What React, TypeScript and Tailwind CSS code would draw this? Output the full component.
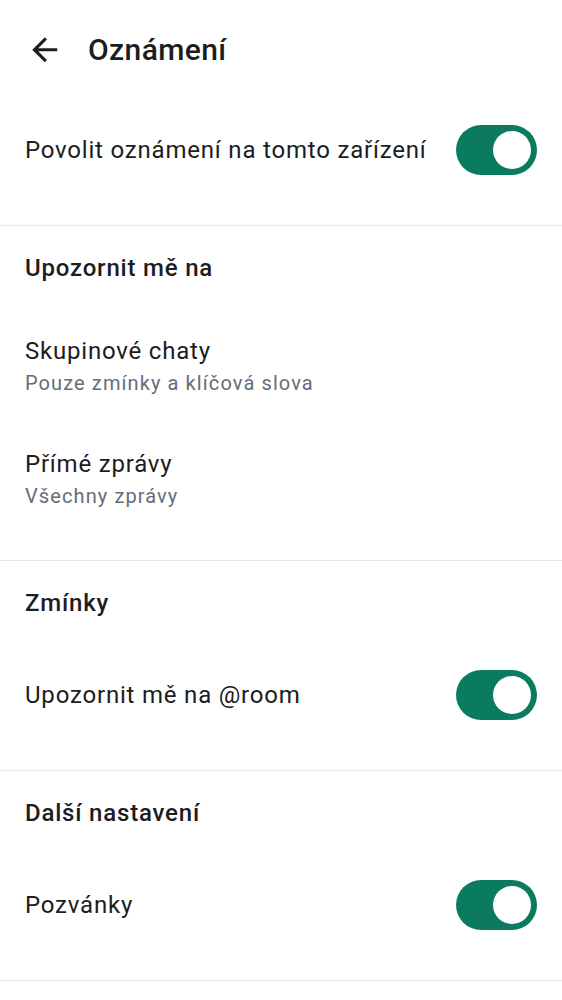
import React from 'react';

const Toggle = () => (
  <div className="w-[81px] h-[50px] rounded-full bg-[#0a7b5f] flex items-center justify-end pr-[6px] shrink-0">
    <div className="w-[38px] h-[38px] rounded-full bg-white" />
  </div>
);

const Divider = () => <div className="h-px bg-[#e7e9ec]" />;

const SwitchRow = ({ label }: { label: string }) => (
  <div className="h-[100px] flex items-center justify-between pl-[25px] pr-[25px]">
    <span className="text-[24px] leading-[32px] tracking-[0.8px] text-[#1b1d22]">{label}</span>
    <Toggle />
  </div>
);

const SectionTitle = ({ title }: { title: string }) => (
  <div className="h-[84px] flex items-center px-[25px]">
    <span className="text-[24px] leading-[32px] tracking-[0.8px] font-medium text-[#1b1d22]">{title}</span>
  </div>
);

const TwoLineRow = ({ title, subtitle }: { title: string; subtitle: string }) => (
  <div className="h-[113px] flex flex-col justify-center px-[25px]">
    <span className="text-[24px] leading-[32px] tracking-[0.8px] text-[#1b1d22]">{title}</span>
    <span className="text-[20px] leading-[32px] tracking-[1.1px] text-[#656d77]">{subtitle}</span>
  </div>
);

export default function App() {
  return (
    <div className="w-[562px] h-[1000px] bg-white overflow-hidden" style={{ fontFamily: 'Roboto, "Noto Sans", sans-serif' }}>
      {/* toolbar */}
      <div className="h-[100px] flex items-center">
        <svg className="ml-[26px] shrink-0" width="37.5" height="37.5" viewBox="0 0 24 24" fill="#1b1d22">
          <path d="M20 11H7.83l5.59-5.59L12 4l-8 8 8 8 1.41-1.41L7.83 13H20v-2z" />
        </svg>
        <span className="ml-[24.5px] text-[30px] leading-[36px] tracking-[0.4px] font-medium text-[#1b1d22]">Oznámení</span>
      </div>

      <SwitchRow label="Povolit oznámení na tomto zařízení" />
      <div className="h-[25px]" />
      <Divider />

      <SectionTitle title="Upozornit mě na" />
      <TwoLineRow title="Skupinové chaty" subtitle="Pouze zmínky a klíčová slova" />
      <TwoLineRow title="Přímé zprávy" subtitle="Všechny zprávy" />
      <div className="h-[24px]" />
      <Divider />

      <SectionTitle title="Zmínky" />
      <SwitchRow label="Upozornit mě na @room" />
      <div className="h-[25px]" />
      <Divider />

      <SectionTitle title="Další nastavení" />
      <SwitchRow label="Pozvánky" />
      <div className="h-[25px]" />
      <Divider />
    </div>
  );
}
